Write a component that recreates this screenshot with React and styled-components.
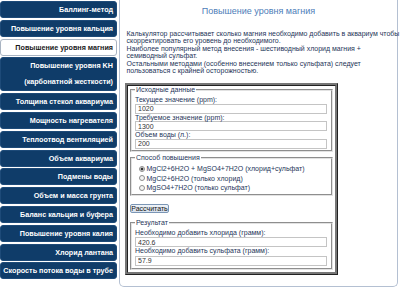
import styled, { createGlobalStyle } from 'styled-components';

const GlobalStyle = createGlobalStyle`
    html, body {
        margin: 0;
        padding: 0;
        background: #fff;
    }
    body {
        font-family: "Liberation Sans", Arial, sans-serif;
    }
`;

const Page = styled.div`
    display: flex;
    width: 400px;
    height: 291px;
    overflow: hidden;
`;

const Menu = styled.nav`
    width: 117px;
    flex: none;
    padding-top: 1px;
    display: flex;
    flex-direction: column;
    gap: 1.8px;
`;

const MenuItem = styled.a`
    display: block;
    height: ${(p) => p.$lines * 17}px;
    box-sizing: border-box;
    padding-right: 3px;
    line-height: 16px;
    text-align: right;
    white-space: nowrap;
    font-size: 7.2px;
    font-weight: bold;
    text-decoration: none;
    color: ${(p) => (p.$active ? '#1a1a1a' : '#fff')};
    background: ${(p) => (p.$active ? '#fff' : '#0f3c69')};
    border: 1px solid ${(p) => (p.$active ? '#a9b4c2' : '#1d4a78')};
    border-radius: 3px;
`;

const Panel = styled.main`
    margin-left: 2px;
    width: 279px;
    height: 287px;
    box-sizing: border-box;
    padding: 5px 5px 0 5px;
    border: 1px solid #b4c0d2;
    border-top: none;
    border-radius: 0 0 5px 5px;
`;

const Title = styled.h1`
    margin: 0;
    font-size: 9px;
    font-weight: normal;
    line-height: 12px;
    text-align: center;
    color: #4d7db8;
`;

const Intro = styled.p`
    margin: 12.5px 0 0 1.5px;
    font-size: 7px;
    line-height: 7.6px;
    white-space: nowrap;
    color: #1e3559;
`;

const Calc = styled.form`
    margin-top: 8px;
    width: 213px;
    box-sizing: border-box;
    padding: 0 2px 2px;
    border: 3px ridge #777;
`;

const Fieldset = styled.fieldset`
    margin: ${(p) => p.$mt || 0}px 0 0;
    padding: 3px 3px ${(p) => p.$pb || 1}px;
    min-width: 0;
    border: 2px groove #e2e2e2;
`;

const Legend = styled.legend`
    padding: 0 1px;
    font-size: 7px;
    line-height: 7px;
    color: #1e3559;
`;

const Label = styled.label`
    display: block;
    font-size: 7px;
    line-height: ${(p) => p.$lh || 7.5}px;
    color: #1e3559;
`;

const Field = styled.input`
    display: block;
    width: 192px;
    height: 10px;
    box-sizing: border-box;
    margin: 0;
    padding: 0 2px;
    font: 7px "Liberation Sans", Arial, sans-serif;
    color: #333;
    background: #fff;
    border: 1px solid #c4c4c4;
    outline: none;
`;

const RadioRow = styled.label`
    display: flex;
    align-items: center;
    gap: 1.5px;
    height: 9.5px;
    padding-left: 4px;
    font-size: 7px;
    color: #1e3559;
    white-space: nowrap;
`;

const Radio = styled.input.attrs({ type: 'radio' })`
    appearance: none;
    flex: none;
    margin: 0;
    width: 6px;
    height: 6px;
    box-sizing: border-box;
    border: 1px solid #8e8e8e;
    border-radius: 50%;
    background: #f4f4f4;
    &:checked {
        background: radial-gradient(circle, #333 0 1.3px, #f4f4f4 1.7px);
    }
`;

const Button = styled.button`
    display: block;
    margin-top: 8px;
    width: 39px;
    height: 9px;
    padding: 0;
    font: 7px "Liberation Sans", Arial, sans-serif;
    line-height: 7px;
    color: #111;
    background: linear-gradient(#f0f4f9, #d6e0ec);
    border: 1px solid #7b96b5;
    border-radius: 2px;
`;

const menu = [
    ['Баллинг-метод'],
    ['Повышение уровня кальция'],
    ['Повышение уровня магния'],
    ['Повышение уровня KH', '(карбонатной жесткости)'],
    ['Толщина стекол аквариума'],
    ['Мощность нагревателя'],
    ['Теплоотвод вентиляцией'],
    ['Объем аквариума'],
    ['Подмены воды'],
    ['Объем и масса грунта'],
    ['Баланс кальция и буфера'],
    ['Повышение уровня калия'],
    ['Хлорид лантана'],
    ['Скорость потока воды в трубе'],
];

const intro = [
    'Калькулятор рассчитывает сколько магния необходимо добавить в аквариум чтобы',
    'скорректировать его уровень до необходимого.',
    'Наиболее популярный метод внесения - шестиводный хлорид магния +',
    'семиводный сульфат.',
    'Остальными методами (особенно внесением только сульфата) следует',
    'пользоваться с крайней осторожностью.',
];

const methods = [
    'MgCl2+6H2O + MgSO4+7H2O (хлорид+сульфат)',
    'MgCl2+6H2O (только хлорид)',
    'MgSO4+7H2O (только сульфат)',
];

export default function App() {
    return (
        <Page>
            <GlobalStyle />
            <Menu>
                {menu.map((lines, i) => (
                    <MenuItem key={i} href="#" $lines={lines.length} $active={i === 2}>
                        {lines.map((l, j) => (
                            <div key={j}>{l}</div>
                        ))}
                    </MenuItem>
                ))}
            </Menu>
            <Panel>
                <Title>Повышение уровня магния</Title>
                <Intro>
                    {intro.map((l, i) => (
                        <span key={i}>
                            {l}
                            <br />
                        </span>
                    ))}
                </Intro>
                <Calc onSubmit={(e) => e.preventDefault()}>
                    <Fieldset>
                        <Legend>Исходные данные</Legend>
                        <Label>Текущее значение (ppm):</Label>
                        <Field defaultValue="1020" />
                        <Label>Требуемое значение (ppm):</Label>
                        <Field defaultValue="1300" />
                        <Label>Объем воды (л.):</Label>
                        <Field defaultValue="200" />
                    </Fieldset>
                    <Fieldset $mt={2.5} $pb={1.5}>
                        <Legend>Способ повышения</Legend>
                        {methods.map((m, i) => (
                            <RadioRow key={i}>
                                <Radio name="method" defaultChecked={i === 0} />
                                {m}
                            </RadioRow>
                        ))}
                    </Fieldset>
                    <Button type="button">Рассчитать</Button>
                    <Fieldset $mt={6} $pb={2}>
                        <Legend>Результат</Legend>
                        <Label $lh={8.4}>Необходимо добавить хлорида (грамм):</Label>
                        <Field defaultValue="420.6" />
                        <Label $lh={8.4}>Необходимо добавить сульфата (грамм):</Label>
                        <Field defaultValue="57.9" />
                    </Fieldset>
                </Calc>
            </Panel>
        </Page>
    );
}
